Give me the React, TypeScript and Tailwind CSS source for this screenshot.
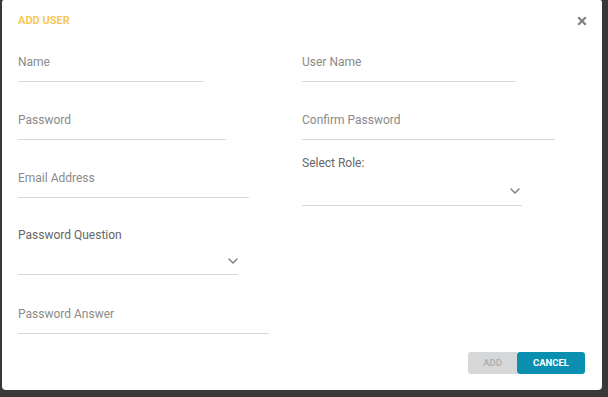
import React from 'react'

function TextField({ label, width, mt }: { label: string; width: string; mt: string }) {
  return (
    <div className={`${width} ${mt} border-b border-[#d9d9d9] pb-[11px]`}>
      <span className="block text-[12px] leading-4 text-[#8a8a8a]">{label}</span>
    </div>
  )
}

function Chevron() {
  return (
    <svg width="10" height="6" viewBox="0 0 10 6" fill="none">
      <path d="M1 1l4 4 4-4" stroke="#7a7a7a" strokeWidth="1.4" strokeLinecap="round" strokeLinejoin="round" />
    </svg>
  )
}

function SelectField({
  label,
  width,
  mt,
  boxClass,
}: {
  label: string
  width: string
  mt: string
  boxClass: string
}) {
  return (
    <div className={`${width} ${mt}`}>
      <span className="block text-[12px] leading-4 text-[#666666]">{label}</span>
      <div className={`flex items-start justify-end border-b border-[#d9d9d9] ${boxClass}`}>
        <Chevron />
      </div>
    </div>
  )
}

export default function App() {
  return (
    <div className="h-[397px] w-[608px] bg-[#383838] font-['Roboto',sans-serif]">
      <div className="ml-[2px] flex h-[390px] w-[600px] flex-col rounded-[4px] rounded-t-[2px] bg-white">
        <div className="flex h-[42px] items-center justify-between px-4">
          <h2 className="text-[11px] font-bold uppercase leading-4 text-[#f9c757]">Add User</h2>
          <svg width="10" height="10" viewBox="0 0 10 10" className="mr-[-0.5px]">
            <path d="M1.2 1.2l7.6 7.6M8.8 1.2l-7.6 7.6" stroke="#808080" strokeWidth="2.2" />
          </svg>
        </div>

        <div className="grid grid-cols-[284px_1fr] pl-4">
          <div className="flex flex-col">
            <TextField label="Name" width="w-[186px]" mt="mt-[12px]" />
            <TextField label="Password" width="w-[208px]" mt="mt-[30px]" />
            <TextField label="Email Address" width="w-[231px]" mt="mt-[30px]" />
            <SelectField label="Password Question" width="w-[220px]" mt="mt-[29px]" boxClass="h-[32px] pt-[15px]" />
            <TextField label="Password Answer" width="w-[251px]" mt="mt-[31px]" />
          </div>
          <div className="flex flex-col">
            <TextField label="User Name" width="w-[214px]" mt="mt-[12px]" />
            <TextField label="Confirm Password" width="w-[253px]" mt="mt-[30px]" />
            <SelectField label="Select Role:" width="w-[220px]" mt="mt-[15px]" boxClass="h-[35px] pt-[17px] pr-[2px]" />
          </div>
        </div>

        <div className="mt-auto flex justify-end pb-[16px] pr-[17px]">
          <button className="h-[22px] w-[49px] rounded-l-[3px] bg-[#d6d7d9] text-[9.5px] font-medium uppercase text-[#adadad]">
            Add
          </button>
          <button className="h-[22px] w-[68px] rounded-[3px] bg-[#0b8fb0] text-[9.5px] font-bold uppercase text-white">
            Cancel
          </button>
        </div>
      </div>
    </div>
  )
}
